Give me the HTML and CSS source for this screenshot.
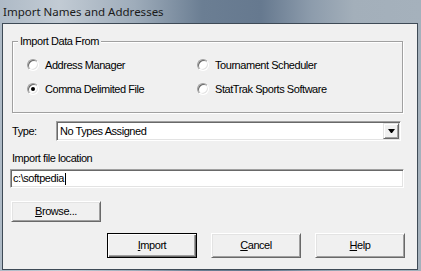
FILE: index.html
```html
<!DOCTYPE html>
<html lang="en">
<head>
  <meta charset="UTF-8">
  <title>Import Names and Addresses</title>
  <link rel="stylesheet" href="styles.css">
</head>
<body>
  <div class="window">
    <div class="titlebar">Import Names and Addresses</div>

    <div class="client">
      <div class="group">
        <span class="group__label">Import Data From</span>
        <div class="group__options">
          <div class="radio"><span class="radio__mark"></span>Address Manager</div>
          <div class="radio"><span class="radio__mark"></span>Tournament Scheduler</div>
          <div class="radio"><span class="radio__mark is-checked"></span>Comma Delimited File</div>
          <div class="radio"><span class="radio__mark"></span>StatTrak Sports Software</div>
        </div>
      </div>

      <div class="field-row">
        <span class="field-row__label">Type:</span>
        <div class="combo">
          <span class="combo__value">No Types Assigned</span>
          <span class="combo__button"></span>
        </div>
      </div>

      <div class="caption">Import file location</div>
      <div class="textbox">c:\softpedia<span class="caret"></span></div>

      <div class="browse-row">
        <button class="btn"><u>B</u>rowse...</button>
      </div>

      <div class="actions">
        <button class="btn btn--default"><u>I</u>mport</button>
        <button class="btn"><u>C</u>ancel</button>
        <button class="btn"><u>H</u>elp</button>
      </div>
    </div>
  </div>
</body>
</html>
```

FILE: styles.css
```css
* {
  box-sizing: border-box;
}

html, body {
  margin: 0;
  padding: 0;
  background: #a5b1bc;
}

.window {
  display: flex;
  flex-direction: column;
  width: 421px;
  height: 271px;
  padding: 0 3px 1px 2px;
  background: linear-gradient(to right, #aebac6 0%, #c2cbd4 14%, #9eacba 32%, #6b7e93 48%, #66798f 62%, #8d9cac 74%, #a3afba 84%, #a5b1bc 100%);
}

.titlebar {
  display: flex;
  align-items: center;
  height: 23px;
  padding-left: 1px;
  font-family: "Noto Sans", "Open Sans", sans-serif;
  font-size: 11.5px;
  color: #1a1a1a;
}

.client {
  flex: 1;
  display: flex;
  flex-direction: column;
  padding: 17px 12px 0 7px;
  border: 1px solid #3e4a56;
  background: #f0f0f0;
  color: #000;
  font-family: "Liberation Sans", Arial, sans-serif;
  font-size: 11px;
  letter-spacing: -0.45px;
  line-height: 13px;
}

/* group box */

.group {
  display: flex;
  flex-direction: column;
  margin: 0 2px;
  padding-bottom: 11px;
  border: 1px solid #a0a0a0;
  box-shadow: inset 1px 1px #fff, 1px 1px #fff;
}

.group__label {
  align-self: flex-start;
  margin: -7px 0 0 5px;
  padding: 0 2px;
  background: #f0f0f0;
}

.group__options {
  display: grid;
  grid-template-columns: 170px 1fr;
  grid-auto-rows: 24px;
  margin-top: 5px;
  padding-left: 14px;
}

.radio {
  display: flex;
  align-items: center;
  gap: 6px;
}

.radio__mark {
  display: flex;
  align-items: center;
  justify-content: center;
  width: 12px;
  height: 12px;
  border: 1px solid;
  border-color: #a0a0a0 #fff #fff #a0a0a0;
  border-radius: 50%;
  background: #fff;
  box-shadow: inset 1px 1px #696969, inset -1px -1px #e3e3e3;
}

.radio__mark.is-checked::after {
  content: '';
  width: 4px;
  height: 4px;
  border-radius: 50%;
  background: #000;
}

/* type combo */

.field-row {
  display: flex;
  align-items: center;
  height: 20px;
  margin-top: 8px;
}

.field-row__label {
  width: 46px;
  padding-left: 2px;
}

.combo {
  flex: 1;
  display: flex;
  align-items: center;
  height: 20px;
  margin-right: 4px;
  padding: 1px;
  border: 1px solid;
  border-color: #a0a0a0 #fff #fff #a0a0a0;
  background: #fff;
  box-shadow: inset 1px 1px #696969, inset -1px -1px #e3e3e3;
}

.combo__value {
  flex: 1;
  padding-left: 2px;
}

.combo__button {
  display: flex;
  align-items: center;
  justify-content: center;
  width: 16px;
  height: 16px;
  border: 1px solid;
  border-color: #e3e3e3 #696969 #696969 #e3e3e3;
  background: #f0f0f0;
  box-shadow: inset 1px 1px #fff, inset -1px -1px #a0a0a0;
}

.combo__button::after {
  content: '';
  width: 1px;
  height: 0;
  border-top: 4px solid #000;
  border-left: 3px solid transparent;
  border-right: 3px solid transparent;
}

/* file location */

.caption {
  margin-top: 11px;
  padding-left: 2px;
}

.textbox {
  display: flex;
  align-items: center;
  height: 19px;
  margin: 4px 1px 0 0;
  padding-left: 2px;
  border: 1px solid;
  border-color: #a0a0a0 #fff #fff #a0a0a0;
  background: #fff;
  box-shadow: inset 1px 1px #696969, inset -1px -1px #e3e3e3;
}

.caret {
  width: 1px;
  height: 12px;
  margin-left: 1px;
  background: #000;
}

/* buttons */

.browse-row {
  display: flex;
  margin-top: 13px;
  padding-left: 1px;
}

.actions {
  display: flex;
  justify-content: flex-end;
  gap: 14px;
  margin-top: 11px;
}

.btn {
  width: 90px;
  height: 21px;
  padding: 0;
  border: 1px solid;
  border-color: #fff #696969 #696969 #fff;
  background: #f0f0f0;
  box-shadow: inset 1px 1px #e3e3e3, inset -1px -1px #a0a0a0;
  color: #000;
  font: inherit;
  letter-spacing: inherit;
}

.actions .btn {
  height: 25px;
}

.btn--default {
  border-color: #000;
  box-shadow: inset 1px 1px #fff, inset -1px -1px #696969, inset -2px -2px #a0a0a0;
}
```
